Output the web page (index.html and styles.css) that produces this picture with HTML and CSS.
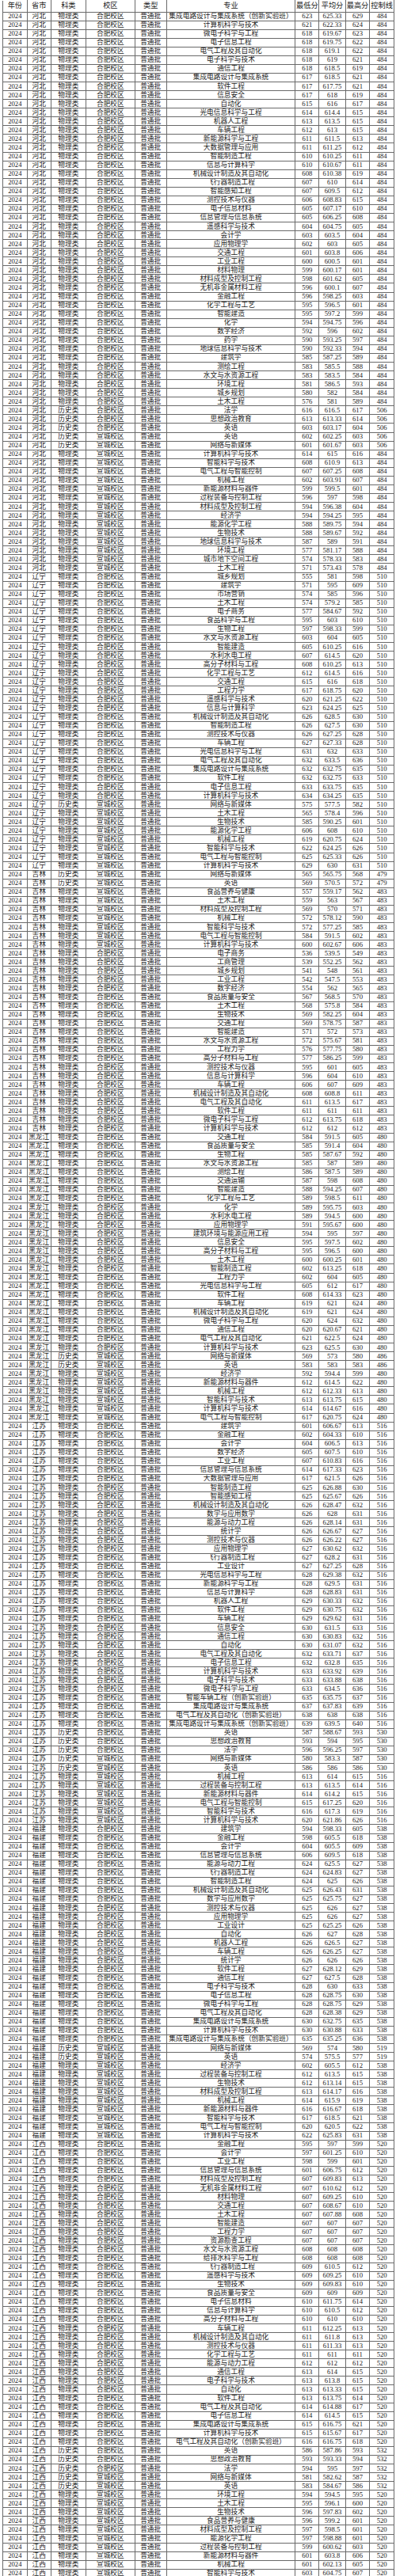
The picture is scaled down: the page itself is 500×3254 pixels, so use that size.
FILE: index.html
```html
<!DOCTYPE html>
<html lang="zh-CN">
<head>
<meta charset="utf-8">
<title>2024 录取分数</title>
<link rel="stylesheet" href="styles.css">
</head>
<body>
<table class="sheet">
<colgroup><col class="c-year"><col class="c-prov"><col class="c-kind"><col class="c-camp"><col class="c-type"><col class="c-major"><col class="c-min"><col class="c-avg"><col class="c-max"><col class="c-line"></colgroup>
<thead>
<tr class="head"><th>年份<th>省市<th>科类<th>校区<th>类型<th>专业<th>最低分<th>平均分<th>最高分<th>控制线
</thead>
<tbody>
<tr><td>2024<td>河北<td>物理类<td>合肥校区<td>普通批<td>集成电路设计与集成系统（创新实验班）<td>623<td>625.33<td>629<td>484
<tr><td>2024<td>河北<td>物理类<td>合肥校区<td>普通批<td>计算机科学与技术<td>621<td>622.33<td>624<td>484
<tr><td>2024<td>河北<td>物理类<td>合肥校区<td>普通批<td>微电子科学与工程<td>618<td>619.67<td>623<td>484
<tr><td>2024<td>河北<td>物理类<td>合肥校区<td>普通批<td>电子信息工程<td>618<td>619.75<td>622<td>484
<tr><td>2024<td>河北<td>物理类<td>合肥校区<td>普通批<td>电气工程及其自动化<td>618<td>619.1<td>622<td>484
<tr><td>2024<td>河北<td>物理类<td>合肥校区<td>普通批<td>电子科学与技术<td>618<td>619<td>621<td>484
<tr><td>2024<td>河北<td>物理类<td>合肥校区<td>普通批<td>通信工程<td>618<td>618.5<td>619<td>484
<tr><td>2024<td>河北<td>物理类<td>合肥校区<td>普通批<td>集成电路设计与集成系统<td>617<td>618.5<td>621<td>484
<tr><td>2024<td>河北<td>物理类<td>合肥校区<td>普通批<td>软件工程<td>617<td>617.75<td>621<td>484
<tr><td>2024<td>河北<td>物理类<td>合肥校区<td>普通批<td>信息安全<td>617<td>618<td>619<td>484
<tr><td>2024<td>河北<td>物理类<td>合肥校区<td>普通批<td>自动化<td>615<td>616<td>617<td>484
<tr><td>2024<td>河北<td>物理类<td>合肥校区<td>普通批<td>光电信息科学与工程<td>614<td>614.4<td>615<td>484
<tr><td>2024<td>河北<td>物理类<td>合肥校区<td>普通批<td>机器人工程<td>613<td>613.5<td>615<td>484
<tr><td>2024<td>河北<td>物理类<td>合肥校区<td>普通批<td>车辆工程<td>612<td>613<td>615<td>484
<tr><td>2024<td>河北<td>物理类<td>合肥校区<td>普通批<td>新能源科学与工程<td>611<td>611.5<td>613<td>484
<tr><td>2024<td>河北<td>物理类<td>合肥校区<td>普通批<td>大数据管理与应用<td>611<td>611.25<td>612<td>484
<tr><td>2024<td>河北<td>物理类<td>合肥校区<td>普通批<td>智能制造工程<td>610<td>610.25<td>611<td>484
<tr><td>2024<td>河北<td>物理类<td>合肥校区<td>普通批<td>信息与计算科学<td>610<td>610.67<td>611<td>484
<tr><td>2024<td>河北<td>物理类<td>合肥校区<td>普通批<td>机械设计制造及其自动化<td>608<td>610.38<td>619<td>484
<tr><td>2024<td>河北<td>物理类<td>合肥校区<td>普通批<td>飞行器制造工程<td>607<td>610<td>614<td>484
<tr><td>2024<td>河北<td>物理类<td>合肥校区<td>普通批<td>智能感知工程<td>607<td>609.5<td>612<td>484
<tr><td>2024<td>河北<td>物理类<td>合肥校区<td>普通批<td>测控技术与仪器<td>606<td>608.83<td>615<td>484
<tr><td>2024<td>河北<td>物理类<td>合肥校区<td>普通批<td>电子信息材料<td>605<td>607.17<td>610<td>484
<tr><td>2024<td>河北<td>物理类<td>合肥校区<td>普通批<td>信息管理与信息系统<td>605<td>606.25<td>608<td>484
<tr><td>2024<td>河北<td>物理类<td>合肥校区<td>普通批<td>遥感科学与技术<td>604<td>604.75<td>605<td>484
<tr><td>2024<td>河北<td>物理类<td>合肥校区<td>普通批<td>会计学<td>603<td>603.5<td>604<td>484
<tr><td>2024<td>河北<td>物理类<td>合肥校区<td>普通批<td>应用物理学<td>602<td>603<td>605<td>484
<tr><td>2024<td>河北<td>物理类<td>合肥校区<td>普通批<td>交通工程<td>601<td>603.8<td>606<td>484
<tr><td>2024<td>河北<td>物理类<td>合肥校区<td>普通批<td>工业工程<td>600<td>600.5<td>601<td>484
<tr><td>2024<td>河北<td>物理类<td>合肥校区<td>普通批<td>材料物理<td>599<td>600.17<td>601<td>484
<tr><td>2024<td>河北<td>物理类<td>合肥校区<td>普通批<td>材料成型及控制工程<td>598<td>601.62<td>605<td>484
<tr><td>2024<td>河北<td>物理类<td>合肥校区<td>普通批<td>无机非金属材料工程<td>596<td>600.1<td>607<td>484
<tr><td>2024<td>河北<td>物理类<td>合肥校区<td>普通批<td>金融工程<td>596<td>598.25<td>603<td>484
<tr><td>2024<td>河北<td>物理类<td>合肥校区<td>普通批<td>化学工程与工艺<td>595<td>596.5<td>601<td>484
<tr><td>2024<td>河北<td>物理类<td>合肥校区<td>普通批<td>智能建造<td>595<td>597.2<td>599<td>484
<tr><td>2024<td>河北<td>物理类<td>合肥校区<td>普通批<td>化学<td>594<td>594.75<td>596<td>484
<tr><td>2024<td>河北<td>物理类<td>合肥校区<td>普通批<td>数字经济<td>592<td>596<td>602<td>484
<tr><td>2024<td>河北<td>物理类<td>合肥校区<td>普通批<td>药学<td>590<td>593.25<td>597<td>484
<tr><td>2024<td>河北<td>物理类<td>合肥校区<td>普通批<td>地球信息科学与技术<td>590<td>592.33<td>594<td>484
<tr><td>2024<td>河北<td>物理类<td>合肥校区<td>普通批<td>建筑学<td>585<td>587.25<td>589<td>484
<tr><td>2024<td>河北<td>物理类<td>合肥校区<td>普通批<td>测绘工程<td>583<td>585.5<td>588<td>484
<tr><td>2024<td>河北<td>物理类<td>合肥校区<td>普通批<td>水文与水资源工程<td>583<td>583.5<td>584<td>484
<tr><td>2024<td>河北<td>物理类<td>合肥校区<td>普通批<td>环境工程<td>581<td>586.5<td>593<td>484
<tr><td>2024<td>河北<td>物理类<td>合肥校区<td>普通批<td>城乡规划<td>580<td>582<td>584<td>484
<tr><td>2024<td>河北<td>物理类<td>合肥校区<td>普通批<td>土木工程<td>576<td>581<td>589<td>484
<tr><td>2024<td>河北<td>历史类<td>合肥校区<td>普通批<td>法学<td>616<td>616.5<td>617<td>506
<tr><td>2024<td>河北<td>历史类<td>合肥校区<td>普通批<td>思想政治教育<td>613<td>613.33<td>614<td>506
<tr><td>2024<td>河北<td>历史类<td>合肥校区<td>普通批<td>英语<td>603<td>603.17<td>604<td>506
<tr><td>2024<td>河北<td>历史类<td>宣城校区<td>普通批<td>英语<td>602<td>602.25<td>603<td>506
<tr><td>2024<td>河北<td>历史类<td>宣城校区<td>普通批<td>网络与新媒体<td>601<td>601.67<td>603<td>506
<tr><td>2024<td>河北<td>物理类<td>宣城校区<td>普通批<td>计算机科学与技术<td>614<td>615<td>616<td>484
<tr><td>2024<td>河北<td>物理类<td>宣城校区<td>普通批<td>智能科学与技术<td>608<td>610.9<td>613<td>484
<tr><td>2024<td>河北<td>物理类<td>宣城校区<td>普通批<td>电气工程与智能控制<td>607<td>607.25<td>608<td>484
<tr><td>2024<td>河北<td>物理类<td>宣城校区<td>普通批<td>机械工程<td>602<td>603.91<td>607<td>484
<tr><td>2024<td>河北<td>物理类<td>宣城校区<td>普通批<td>新能源材料与器件<td>599<td>599.5<td>601<td>484
<tr><td>2024<td>河北<td>物理类<td>宣城校区<td>普通批<td>过程装备与控制工程<td>596<td>597<td>598<td>484
<tr><td>2024<td>河北<td>物理类<td>宣城校区<td>普通批<td>材料成型及控制工程<td>594<td>596.38<td>604<td>484
<tr><td>2024<td>河北<td>物理类<td>宣城校区<td>普通批<td>经济学<td>594<td>594.25<td>595<td>484
<tr><td>2024<td>河北<td>物理类<td>宣城校区<td>普通批<td>能源化学工程<td>588<td>589.75<td>594<td>484
<tr><td>2024<td>河北<td>物理类<td>宣城校区<td>普通批<td>生物技术<td>588<td>589.67<td>592<td>484
<tr><td>2024<td>河北<td>物理类<td>宣城校区<td>普通批<td>地球信息科学与技术<td>587<td>589<td>591<td>484
<tr><td>2024<td>河北<td>物理类<td>宣城校区<td>普通批<td>环境工程<td>577<td>581.17<td>588<td>484
<tr><td>2024<td>河北<td>物理类<td>宣城校区<td>普通批<td>城市地下空间工程<td>574<td>578.33<td>583<td>484
<tr><td>2024<td>河北<td>物理类<td>宣城校区<td>普通批<td>土木工程<td>571<td>573.43<td>578<td>484
<tr><td>2024<td>辽宁<td>物理类<td>合肥校区<td>普通批<td>城乡规划<td>555<td>581<td>598<td>510
<tr><td>2024<td>辽宁<td>物理类<td>合肥校区<td>普通批<td>建筑学<td>571<td>595<td>609<td>510
<tr><td>2024<td>辽宁<td>物理类<td>合肥校区<td>普通批<td>市场营销<td>574<td>585<td>596<td>510
<tr><td>2024<td>辽宁<td>物理类<td>合肥校区<td>普通批<td>土木工程<td>574<td>579.2<td>585<td>510
<tr><td>2024<td>辽宁<td>物理类<td>合肥校区<td>普通批<td>电子商务<td>577<td>584.67<td>592<td>510
<tr><td>2024<td>辽宁<td>物理类<td>合肥校区<td>普通批<td>食品科学与工程<td>595<td>603<td>610<td>510
<tr><td>2024<td>辽宁<td>物理类<td>合肥校区<td>普通批<td>生物工程<td>597<td>598.33<td>599<td>510
<tr><td>2024<td>辽宁<td>物理类<td>合肥校区<td>普通批<td>水文与水资源工程<td>603<td>604<td>605<td>510
<tr><td>2024<td>辽宁<td>物理类<td>合肥校区<td>普通批<td>智能建造<td>605<td>610.25<td>616<td>510
<tr><td>2024<td>辽宁<td>物理类<td>合肥校区<td>普通批<td>水利水电工程<td>607<td>614.5<td>620<td>510
<tr><td>2024<td>辽宁<td>物理类<td>合肥校区<td>普通批<td>高分子材料与工程<td>608<td>610.25<td>613<td>510
<tr><td>2024<td>辽宁<td>物理类<td>合肥校区<td>普通批<td>化学工程与工艺<td>612<td>614.5<td>616<td>510
<tr><td>2024<td>辽宁<td>物理类<td>合肥校区<td>普通批<td>交通工程<td>615<td>616<td>618<td>510
<tr><td>2024<td>辽宁<td>物理类<td>合肥校区<td>普通批<td>工程力学<td>617<td>618.75<td>620<td>510
<tr><td>2024<td>辽宁<td>物理类<td>合肥校区<td>普通批<td>遥感科学与技术<td>620<td>621.25<td>622<td>510
<tr><td>2024<td>辽宁<td>物理类<td>合肥校区<td>普通批<td>信息与计算科学<td>623<td>624.25<td>625<td>510
<tr><td>2024<td>辽宁<td>物理类<td>合肥校区<td>普通批<td>机械设计制造及其自动化<td>626<td>628.5<td>630<td>510
<tr><td>2024<td>辽宁<td>物理类<td>合肥校区<td>普通批<td>智能制造工程<td>626<td>627.5<td>630<td>510
<tr><td>2024<td>辽宁<td>物理类<td>合肥校区<td>普通批<td>测控技术与仪器<td>626<td>627.25<td>628<td>510
<tr><td>2024<td>辽宁<td>物理类<td>合肥校区<td>普通批<td>车辆工程<td>627<td>627.33<td>628<td>510
<tr><td>2024<td>辽宁<td>物理类<td>合肥校区<td>普通批<td>光电信息科学与工程<td>631<td>632<td>633<td>510
<tr><td>2024<td>辽宁<td>物理类<td>合肥校区<td>普通批<td>电气工程及其自动化<td>632<td>633.5<td>636<td>510
<tr><td>2024<td>辽宁<td>物理类<td>合肥校区<td>普通批<td>集成电路设计与集成系统<td>632<td>632.75<td>635<td>510
<tr><td>2024<td>辽宁<td>物理类<td>合肥校区<td>普通批<td>软件工程<td>632<td>632.75<td>633<td>510
<tr><td>2024<td>辽宁<td>物理类<td>合肥校区<td>普通批<td>电子信息工程<td>633<td>633.75<td>635<td>510
<tr><td>2024<td>辽宁<td>物理类<td>合肥校区<td>普通批<td>计算机科学与技术<td>634<td>634.25<td>635<td>510
<tr><td>2024<td>辽宁<td>历史类<td>宣城校区<td>普通批<td>网络与新媒体<td>575<td>577.5<td>582<td>510
<tr><td>2024<td>辽宁<td>物理类<td>宣城校区<td>普通批<td>土木工程<td>565<td>578.4<td>596<td>510
<tr><td>2024<td>辽宁<td>物理类<td>宣城校区<td>普通批<td>生物技术<td>585<td>590.25<td>601<td>510
<tr><td>2024<td>辽宁<td>物理类<td>宣城校区<td>普通批<td>能源化学工程<td>606<td>608<td>610<td>510
<tr><td>2024<td>辽宁<td>物理类<td>宣城校区<td>普通批<td>机械工程<td>619<td>620.75<td>624<td>510
<tr><td>2024<td>辽宁<td>物理类<td>宣城校区<td>普通批<td>智能科学与技术<td>622<td>624.25<td>626<td>510
<tr><td>2024<td>辽宁<td>物理类<td>宣城校区<td>普通批<td>电气工程与智能控制<td>625<td>625.33<td>626<td>510
<tr><td>2024<td>辽宁<td>物理类<td>宣城校区<td>普通批<td>计算机科学与技术<td>629<td>630<td>631<td>510
<tr><td>2024<td>吉林<td>历史类<td>宣城校区<td>普通批<td>网络与新媒体<td>565<td>565.75<td>568<td>479
<tr><td>2024<td>吉林<td>历史类<td>宣城校区<td>普通批<td>英语<td>569<td>570.5<td>572<td>479
<tr><td>2024<td>吉林<td>物理类<td>宣城校区<td>普通批<td>食品营养与健康<td>557<td>559.17<td>562<td>483
<tr><td>2024<td>吉林<td>物理类<td>宣城校区<td>普通批<td>土木工程<td>559<td>563<td>567<td>483
<tr><td>2024<td>吉林<td>物理类<td>宣城校区<td>普通批<td>材料成型及控制工程<td>569<td>570<td>571<td>483
<tr><td>2024<td>吉林<td>物理类<td>宣城校区<td>普通批<td>机械工程<td>572<td>578.12<td>590<td>483
<tr><td>2024<td>吉林<td>物理类<td>宣城校区<td>普通批<td>智能科学与技术<td>572<td>577.25<td>585<td>483
<tr><td>2024<td>吉林<td>物理类<td>宣城校区<td>普通批<td>电气工程与智能控制<td>584<td>591.5<td>602<td>483
<tr><td>2024<td>吉林<td>物理类<td>宣城校区<td>普通批<td>计算机科学与技术<td>600<td>602.67<td>606<td>483
<tr><td>2024<td>吉林<td>物理类<td>合肥校区<td>普通批<td>电子商务<td>536<td>539.5<td>549<td>483
<tr><td>2024<td>吉林<td>物理类<td>合肥校区<td>普通批<td>工商管理<td>539<td>552.25<td>562<td>483
<tr><td>2024<td>吉林<td>物理类<td>合肥校区<td>普通批<td>城乡规划<td>541<td>548<td>561<td>483
<tr><td>2024<td>吉林<td>物理类<td>合肥校区<td>普通批<td>工业工程<td>542<td>547.5<td>553<td>483
<tr><td>2024<td>吉林<td>物理类<td>合肥校区<td>普通批<td>数字经济<td>554<td>562<td>565<td>483
<tr><td>2024<td>吉林<td>物理类<td>合肥校区<td>普通批<td>食品质量与安全<td>567<td>568.5<td>570<td>483
<tr><td>2024<td>吉林<td>物理类<td>合肥校区<td>普通批<td>土木工程<td>568<td>575.8<td>584<td>483
<tr><td>2024<td>吉林<td>物理类<td>合肥校区<td>普通批<td>生物技术<td>569<td>582.25<td>604<td>483
<tr><td>2024<td>吉林<td>物理类<td>合肥校区<td>普通批<td>交通工程<td>569<td>578.75<td>587<td>483
<tr><td>2024<td>吉林<td>物理类<td>合肥校区<td>普通批<td>智能建造<td>571<td>572<td>573<td>483
<tr><td>2024<td>吉林<td>物理类<td>合肥校区<td>普通批<td>水文与水资源工程<td>572<td>575.67<td>581<td>483
<tr><td>2024<td>吉林<td>物理类<td>合肥校区<td>普通批<td>工程力学<td>576<td>577.75<td>580<td>483
<tr><td>2024<td>吉林<td>物理类<td>合肥校区<td>普通批<td>高分子材料与工程<td>577<td>586.25<td>599<td>483
<tr><td>2024<td>吉林<td>物理类<td>合肥校区<td>普通批<td>测控技术与仪器<td>595<td>601<td>605<td>483
<tr><td>2024<td>吉林<td>物理类<td>合肥校区<td>普通批<td>信息与计算科学<td>596<td>604<td>610<td>483
<tr><td>2024<td>吉林<td>物理类<td>合肥校区<td>普通批<td>车辆工程<td>606<td>607<td>609<td>483
<tr><td>2024<td>吉林<td>物理类<td>合肥校区<td>普通批<td>机械设计制造及其自动化<td>608<td>608.8<td>611<td>483
<tr><td>2024<td>吉林<td>物理类<td>合肥校区<td>普通批<td>电气工程及其自动化<td>611<td>613.5<td>617<td>483
<tr><td>2024<td>吉林<td>物理类<td>合肥校区<td>普通批<td>软件工程<td>611<td>611<td>611<td>483
<tr><td>2024<td>吉林<td>物理类<td>合肥校区<td>普通批<td>微电子科学与工程<td>612<td>613.75<td>618<td>483
<tr><td>2024<td>吉林<td>物理类<td>合肥校区<td>普通批<td>计算机科学与技术<td>612<td>612<td>612<td>483
<tr><td>2024<td>黑龙江<td>物理类<td>合肥校区<td>普通批<td>交通工程<td>584<td>591.5<td>605<td>480
<tr><td>2024<td>黑龙江<td>物理类<td>合肥校区<td>普通批<td>食品质量与安全<td>585<td>591.4<td>604<td>480
<tr><td>2024<td>黑龙江<td>物理类<td>合肥校区<td>普通批<td>生物工程<td>585<td>587.67<td>592<td>480
<tr><td>2024<td>黑龙江<td>物理类<td>合肥校区<td>普通批<td>水文与水资源工程<td>585<td>587<td>589<td>480
<tr><td>2024<td>黑龙江<td>物理类<td>合肥校区<td>普通批<td>测绘工程<td>586<td>587.5<td>589<td>480
<tr><td>2024<td>黑龙江<td>物理类<td>合肥校区<td>普通批<td>交通运输<td>587<td>598<td>608<td>480
<tr><td>2024<td>黑龙江<td>物理类<td>合肥校区<td>普通批<td>智能建造<td>588<td>594.25<td>607<td>480
<tr><td>2024<td>黑龙江<td>物理类<td>合肥校区<td>普通批<td>化学工程与工艺<td>589<td>598.5<td>611<td>480
<tr><td>2024<td>黑龙江<td>物理类<td>合肥校区<td>普通批<td>化学<td>589<td>595.75<td>603<td>480
<tr><td>2024<td>黑龙江<td>物理类<td>合肥校区<td>普通批<td>水利水电工程<td>589<td>594.5<td>600<td>480
<tr><td>2024<td>黑龙江<td>物理类<td>合肥校区<td>普通批<td>应用物理学<td>591<td>595.67<td>600<td>480
<tr><td>2024<td>黑龙江<td>物理类<td>合肥校区<td>普通批<td>建筑环境与能源应用工程<td>594<td>595<td>597<td>480
<tr><td>2024<td>黑龙江<td>物理类<td>合肥校区<td>普通批<td>信息安全<td>595<td>597.5<td>602<td>480
<tr><td>2024<td>黑龙江<td>物理类<td>合肥校区<td>普通批<td>高分子材料与工程<td>595<td>596.5<td>600<td>480
<tr><td>2024<td>黑龙江<td>物理类<td>合肥校区<td>普通批<td>土木工程<td>600<td>600.25<td>601<td>480
<tr><td>2024<td>黑龙江<td>物理类<td>合肥校区<td>普通批<td>智能制造工程<td>602<td>613.25<td>618<td>480
<tr><td>2024<td>黑龙江<td>物理类<td>合肥校区<td>普通批<td>工程力学<td>602<td>604<td>605<td>480
<tr><td>2024<td>黑龙江<td>物理类<td>合肥校区<td>普通批<td>光电信息科学与工程<td>605<td>612<td>617<td>480
<tr><td>2024<td>黑龙江<td>物理类<td>合肥校区<td>普通批<td>软件工程<td>608<td>614.33<td>623<td>480
<tr><td>2024<td>黑龙江<td>物理类<td>合肥校区<td>普通批<td>车辆工程<td>619<td>621<td>624<td>480
<tr><td>2024<td>黑龙江<td>物理类<td>合肥校区<td>普通批<td>机械设计制造及其自动化<td>619<td>621<td>624<td>480
<tr><td>2024<td>黑龙江<td>物理类<td>合肥校区<td>普通批<td>微电子科学与工程<td>620<td>624<td>632<td>480
<tr><td>2024<td>黑龙江<td>物理类<td>合肥校区<td>普通批<td>通信工程<td>620<td>620.67<td>621<td>480
<tr><td>2024<td>黑龙江<td>物理类<td>合肥校区<td>普通批<td>电气工程及其自动化<td>621<td>622.5<td>624<td>480
<tr><td>2024<td>黑龙江<td>物理类<td>合肥校区<td>普通批<td>计算机科学与技术<td>623<td>625.5<td>630<td>480
<tr><td>2024<td>黑龙江<td>历史类<td>宣城校区<td>普通批<td>网络与新媒体<td>569<td>573<td>580<td>486
<tr><td>2024<td>黑龙江<td>历史类<td>宣城校区<td>普通批<td>英语<td>583<td>583<td>583<td>486
<tr><td>2024<td>黑龙江<td>物理类<td>宣城校区<td>普通批<td>经济学<td>592<td>594.4<td>599<td>480
<tr><td>2024<td>黑龙江<td>物理类<td>宣城校区<td>普通批<td>新能源材料与器件<td>612<td>614.5<td>622<td>480
<tr><td>2024<td>黑龙江<td>物理类<td>宣城校区<td>普通批<td>机械工程<td>612<td>612.33<td>613<td>480
<tr><td>2024<td>黑龙江<td>物理类<td>宣城校区<td>普通批<td>智能科学与技术<td>613<td>613.75<td>615<td>480
<tr><td>2024<td>黑龙江<td>物理类<td>宣城校区<td>普通批<td>计算机科学与技术<td>614<td>614.67<td>616<td>480
<tr><td>2024<td>黑龙江<td>物理类<td>宣城校区<td>普通批<td>电气工程与智能控制<td>617<td>620.75<td>624<td>480
<tr><td>2024<td>江苏<td>物理类<td>合肥校区<td>普通批<td>建筑学<td>601<td>606.67<td>613<td>516
<tr><td>2024<td>江苏<td>物理类<td>合肥校区<td>普通批<td>金融工程<td>602<td>604.33<td>610<td>516
<tr><td>2024<td>江苏<td>物理类<td>合肥校区<td>普通批<td>会计学<td>604<td>606.5<td>613<td>516
<tr><td>2024<td>江苏<td>物理类<td>合肥校区<td>普通批<td>数字经济<td>605<td>607.5<td>610<td>516
<tr><td>2024<td>江苏<td>物理类<td>合肥校区<td>普通批<td>工业工程<td>607<td>610.83<td>616<td>516
<tr><td>2024<td>江苏<td>物理类<td>合肥校区<td>普通批<td>信息管理与信息系统<td>614<td>617.33<td>623<td>516
<tr><td>2024<td>江苏<td>物理类<td>合肥校区<td>普通批<td>大数据管理与应用<td>617<td>621.5<td>626<td>516
<tr><td>2024<td>江苏<td>物理类<td>合肥校区<td>普通批<td>智能制造工程<td>625<td>626.88<td>630<td>516
<tr><td>2024<td>江苏<td>物理类<td>合肥校区<td>普通批<td>智能感知工程<td>625<td>625.67<td>626<td>516
<tr><td>2024<td>江苏<td>物理类<td>合肥校区<td>普通批<td>机械设计制造及其自动化<td>626<td>628.47<td>632<td>516
<tr><td>2024<td>江苏<td>物理类<td>合肥校区<td>普通批<td>数学与应用数学<td>626<td>628<td>631<td>516
<tr><td>2024<td>江苏<td>物理类<td>合肥校区<td>普通批<td>能源与动力工程<td>626<td>628.14<td>631<td>516
<tr><td>2024<td>江苏<td>物理类<td>合肥校区<td>普通批<td>统计学<td>626<td>626.67<td>627<td>516
<tr><td>2024<td>江苏<td>物理类<td>合肥校区<td>普通批<td>测控技术与仪器<td>626<td>626.22<td>627<td>516
<tr><td>2024<td>江苏<td>物理类<td>合肥校区<td>普通批<td>应用物理学<td>627<td>630.62<td>632<td>516
<tr><td>2024<td>江苏<td>物理类<td>合肥校区<td>普通批<td>飞行器制造工程<td>627<td>628.2<td>631<td>516
<tr><td>2024<td>江苏<td>物理类<td>合肥校区<td>普通批<td>工业设计<td>627<td>627.25<td>628<td>516
<tr><td>2024<td>江苏<td>物理类<td>合肥校区<td>普通批<td>光电信息科学与工程<td>628<td>629.38<td>632<td>516
<tr><td>2024<td>江苏<td>物理类<td>合肥校区<td>普通批<td>新能源科学与工程<td>628<td>629.5<td>631<td>516
<tr><td>2024<td>江苏<td>物理类<td>合肥校区<td>普通批<td>信息与计算科学<td>628<td>628.83<td>631<td>516
<tr><td>2024<td>江苏<td>物理类<td>合肥校区<td>普通批<td>机器人工程<td>629<td>630.33<td>632<td>516
<tr><td>2024<td>江苏<td>物理类<td>合肥校区<td>普通批<td>软件工程<td>629<td>630.75<td>632<td>516
<tr><td>2024<td>江苏<td>物理类<td>合肥校区<td>普通批<td>车辆工程<td>629<td>629.62<td>631<td>516
<tr><td>2024<td>江苏<td>物理类<td>合肥校区<td>普通批<td>信息安全<td>630<td>631.5<td>633<td>516
<tr><td>2024<td>江苏<td>物理类<td>合肥校区<td>普通批<td>通信工程<td>630<td>630.83<td>632<td>516
<tr><td>2024<td>江苏<td>物理类<td>合肥校区<td>普通批<td>自动化<td>630<td>631.07<td>632<td>516
<tr><td>2024<td>江苏<td>物理类<td>合肥校区<td>普通批<td>电气工程及其自动化<td>632<td>633.71<td>637<td>516
<tr><td>2024<td>江苏<td>物理类<td>合肥校区<td>普通批<td>电子信息工程<td>632<td>632.8<td>635<td>516
<tr><td>2024<td>江苏<td>物理类<td>合肥校区<td>普通批<td>计算机科学与技术<td>633<td>633.92<td>639<td>516
<tr><td>2024<td>江苏<td>物理类<td>合肥校区<td>普通批<td>电子科学与技术<td>633<td>633.88<td>638<td>516
<tr><td>2024<td>江苏<td>物理类<td>合肥校区<td>普通批<td>微电子科学与工程<td>633<td>634.5<td>636<td>516
<tr><td>2024<td>江苏<td>物理类<td>合肥校区<td>普通批<td>智能车辆工程（创新实验班）<td>635<td>635.75<td>637<td>516
<tr><td>2024<td>江苏<td>物理类<td>合肥校区<td>普通批<td>集成电路设计与集成系统<td>637<td>637.83<td>639<td>516
<tr><td>2024<td>江苏<td>物理类<td>合肥校区<td>普通批<td>电气工程及其自动化（创新实验班）<td>638<td>638<td>638<td>516
<tr><td>2024<td>江苏<td>物理类<td>合肥校区<td>普通批<td>集成电路设计与集成系统（创新实验班）<td>639<td>639.5<td>640<td>516
<tr><td>2024<td>江苏<td>历史类<td>合肥校区<td>普通批<td>英语<td>587<td>588.67<td>593<td>530
<tr><td>2024<td>江苏<td>历史类<td>合肥校区<td>普通批<td>思想政治教育<td>593<td>594<td>595<td>530
<tr><td>2024<td>江苏<td>历史类<td>合肥校区<td>普通批<td>法学<td>596<td>596.25<td>597<td>530
<tr><td>2024<td>江苏<td>历史类<td>宣城校区<td>普通批<td>网络与新媒体<td>580<td>583.3<td>587<td>530
<tr><td>2024<td>江苏<td>历史类<td>宣城校区<td>普通批<td>英语<td>586<td>586<td>586<td>530
<tr><td>2024<td>江苏<td>物理类<td>宣城校区<td>普通批<td>机械工程<td>613<td>614<td>615<td>516
<tr><td>2024<td>江苏<td>物理类<td>宣城校区<td>普通批<td>过程装备与控制工程<td>613<td>613.5<td>614<td>516
<tr><td>2024<td>江苏<td>物理类<td>宣城校区<td>普通批<td>新能源材料与器件<td>614<td>614.2<td>615<td>516
<tr><td>2024<td>江苏<td>物理类<td>宣城校区<td>普通批<td>电气工程与智能控制<td>615<td>617.25<td>620<td>516
<tr><td>2024<td>江苏<td>物理类<td>宣城校区<td>普通批<td>智能科学与技术<td>616<td>617.3<td>619<td>516
<tr><td>2024<td>江苏<td>物理类<td>宣城校区<td>普通批<td>计算机科学与技术<td>620<td>621.86<td>626<td>516
<tr><td>2024<td>福建<td>物理类<td>合肥校区<td>普通批<td>建筑学<td>594<td>598.33<td>605<td>538
<tr><td>2024<td>福建<td>物理类<td>合肥校区<td>普通批<td>金融工程<td>598<td>605.5<td>618<td>538
<tr><td>2024<td>福建<td>物理类<td>合肥校区<td>普通批<td>会计学<td>604<td>605.5<td>609<td>538
<tr><td>2024<td>福建<td>物理类<td>合肥校区<td>普通批<td>信息管理与信息系统<td>606<td>609.5<td>618<td>538
<tr><td>2024<td>福建<td>物理类<td>合肥校区<td>普通批<td>能源与动力工程<td>624<td>625.5<td>627<td>538
<tr><td>2024<td>福建<td>物理类<td>合肥校区<td>普通批<td>飞行器制造工程<td>624<td>624.83<td>627<td>538
<tr><td>2024<td>福建<td>物理类<td>合肥校区<td>普通批<td>智能制造工程<td>624<td>625<td>626<td>538
<tr><td>2024<td>福建<td>物理类<td>合肥校区<td>普通批<td>机械设计制造及其自动化<td>625<td>626.43<td>631<td>538
<tr><td>2024<td>福建<td>物理类<td>合肥校区<td>普通批<td>数学与应用数学<td>625<td>625.75<td>627<td>538
<tr><td>2024<td>福建<td>物理类<td>合肥校区<td>普通批<td>测控技术与仪器<td>625<td>626<td>627<td>538
<tr><td>2024<td>福建<td>物理类<td>合肥校区<td>普通批<td>应用物理学<td>625<td>626<td>627<td>538
<tr><td>2024<td>福建<td>物理类<td>合肥校区<td>普通批<td>工业设计<td>625<td>625.25<td>626<td>538
<tr><td>2024<td>福建<td>物理类<td>合肥校区<td>普通批<td>自动化<td>626<td>627<td>628<td>538
<tr><td>2024<td>福建<td>物理类<td>合肥校区<td>普通批<td>机器人工程<td>626<td>626.5<td>627<td>538
<tr><td>2024<td>福建<td>物理类<td>合肥校区<td>普通批<td>车辆工程<td>626<td>626.25<td>627<td>538
<tr><td>2024<td>福建<td>物理类<td>合肥校区<td>普通批<td>统计学<td>626<td>626<td>626<td>538
<tr><td>2024<td>福建<td>物理类<td>合肥校区<td>普通批<td>软件工程<td>627<td>628.12<td>629<td>538
<tr><td>2024<td>福建<td>物理类<td>合肥校区<td>普通批<td>通信工程<td>627<td>627.5<td>628<td>538
<tr><td>2024<td>福建<td>物理类<td>合肥校区<td>普通批<td>电子科学与技术<td>628<td>630<td>633<td>538
<tr><td>2024<td>福建<td>物理类<td>合肥校区<td>普通批<td>电子信息工程<td>628<td>628.75<td>630<td>538
<tr><td>2024<td>福建<td>物理类<td>合肥校区<td>普通批<td>微电子科学与工程<td>628<td>628.75<td>629<td>538
<tr><td>2024<td>福建<td>物理类<td>合肥校区<td>普通批<td>电气工程及其自动化<td>628<td>628.38<td>629<td>538
<tr><td>2024<td>福建<td>物理类<td>合肥校区<td>普通批<td>集成电路设计与集成系统<td>630<td>632.75<td>635<td>538
<tr><td>2024<td>福建<td>物理类<td>合肥校区<td>普通批<td>计算机科学与技术<td>630<td>630.88<td>633<td>538
<tr><td>2024<td>福建<td>物理类<td>合肥校区<td>普通批<td>集成电路设计与集成系统（创新实验班）<td>635<td>635.25<td>636<td>538
<tr><td>2024<td>福建<td>历史类<td>宣城校区<td>普通批<td>网络与新媒体<td>569<td>574<td>580<td>519
<tr><td>2024<td>福建<td>历史类<td>宣城校区<td>普通批<td>英语<td>574<td>575.5<td>577<td>519
<tr><td>2024<td>福建<td>物理类<td>宣城校区<td>普通批<td>经济学<td>602<td>605.5<td>612<td>538
<tr><td>2024<td>福建<td>物理类<td>宣城校区<td>普通批<td>过程装备与控制工程<td>612<td>613.5<td>615<td>538
<tr><td>2024<td>福建<td>物理类<td>宣城校区<td>普通批<td>生物技术<td>612<td>613.14<td>615<td>538
<tr><td>2024<td>福建<td>物理类<td>宣城校区<td>普通批<td>材料成型及控制工程<td>613<td>614.17<td>616<td>538
<tr><td>2024<td>福建<td>物理类<td>宣城校区<td>普通批<td>机械工程<td>614<td>615.9<td>619<td>538
<tr><td>2024<td>福建<td>物理类<td>宣城校区<td>普通批<td>新能源材料与器件<td>616<td>616.67<td>618<td>538
<tr><td>2024<td>福建<td>物理类<td>宣城校区<td>普通批<td>智能科学与技术<td>617<td>618.5<td>621<td>538
<tr><td>2024<td>福建<td>物理类<td>宣城校区<td>普通批<td>电气工程与智能控制<td>620<td>620.5<td>622<td>538
<tr><td>2024<td>福建<td>物理类<td>宣城校区<td>普通批<td>计算机科学与技术<td>622<td>625.83<td>631<td>538
<tr><td>2024<td>江西<td>物理类<td>合肥校区<td>普通批<td>金融工程<td>595<td>597<td>599<td>520
<tr><td>2024<td>江西<td>物理类<td>合肥校区<td>普通批<td>会计学<td>597<td>601.25<td>610<td>520
<tr><td>2024<td>江西<td>物理类<td>合肥校区<td>普通批<td>工业工程<td>598<td>599<td>601<td>520
<tr><td>2024<td>江西<td>物理类<td>合肥校区<td>普通批<td>信息管理与信息系统<td>601<td>606.75<td>612<td>520
<tr><td>2024<td>江西<td>物理类<td>合肥校区<td>普通批<td>材料成型及控制工程<td>607<td>609.83<td>613<td>520
<tr><td>2024<td>江西<td>物理类<td>合肥校区<td>普通批<td>无机非金属材料工程<td>607<td>610.62<td>612<td>520
<tr><td>2024<td>江西<td>物理类<td>合肥校区<td>普通批<td>材料物理<td>607<td>609.25<td>610<td>520
<tr><td>2024<td>江西<td>物理类<td>合肥校区<td>普通批<td>交通工程<td>607<td>608.67<td>610<td>520
<tr><td>2024<td>江西<td>物理类<td>合肥校区<td>普通批<td>土木工程<td>607<td>607.88<td>608<td>520
<tr><td>2024<td>江西<td>物理类<td>合肥校区<td>普通批<td>智能建造<td>607<td>607<td>607<td>520
<tr><td>2024<td>江西<td>物理类<td>合肥校区<td>普通批<td>工程力学<td>607<td>607<td>607<td>520
<tr><td>2024<td>江西<td>物理类<td>合肥校区<td>普通批<td>资源勘查工程<td>607<td>607<td>607<td>520
<tr><td>2024<td>江西<td>物理类<td>合肥校区<td>普通批<td>水文与水资源工程<td>608<td>608<td>608<td>520
<tr><td>2024<td>江西<td>物理类<td>合肥校区<td>普通批<td>给排水科学与工程<td>608<td>608<td>608<td>520
<tr><td>2024<td>江西<td>物理类<td>合肥校区<td>普通批<td>飞行器制造工程<td>609<td>610.5<td>612<td>520
<tr><td>2024<td>江西<td>物理类<td>合肥校区<td>普通批<td>遥感科学与技术<td>609<td>609.25<td>610<td>520
<tr><td>2024<td>江西<td>物理类<td>合肥校区<td>普通批<td>生物技术<td>609<td>609.83<td>610<td>520
<tr><td>2024<td>江西<td>物理类<td>合肥校区<td>普通批<td>食品质量与安全<td>609<td>609<td>609<td>520
<tr><td>2024<td>江西<td>物理类<td>合肥校区<td>普通批<td>电子信息材料<td>610<td>611.75<td>614<td>520
<tr><td>2024<td>江西<td>物理类<td>合肥校区<td>普通批<td>信息与计算科学<td>610<td>610.5<td>612<td>520
<tr><td>2024<td>江西<td>物理类<td>合肥校区<td>普通批<td>高分子材料与工程<td>610<td>610<td>610<td>520
<tr><td>2024<td>江西<td>物理类<td>合肥校区<td>普通批<td>车辆工程<td>611<td>612.25<td>613<td>520
<tr><td>2024<td>江西<td>物理类<td>合肥校区<td>普通批<td>机械设计制造及其自动化<td>611<td>611.8<td>613<td>520
<tr><td>2024<td>江西<td>物理类<td>合肥校区<td>普通批<td>测控技术与仪器<td>611<td>611.33<td>613<td>520
<tr><td>2024<td>江西<td>物理类<td>合肥校区<td>普通批<td>化学工程与工艺<td>611<td>611<td>611<td>520
<tr><td>2024<td>江西<td>物理类<td>合肥校区<td>普通批<td>能源与动力工程<td>612<td>612<td>612<td>520
<tr><td>2024<td>江西<td>物理类<td>合肥校区<td>普通批<td>通信工程<td>613<td>614<td>615<td>520
<tr><td>2024<td>江西<td>物理类<td>合肥校区<td>普通批<td>电子科学与技术<td>613<td>613.8<td>615<td>520
<tr><td>2024<td>江西<td>物理类<td>合肥校区<td>普通批<td>自动化<td>613<td>613.33<td>615<td>520
<tr><td>2024<td>江西<td>物理类<td>合肥校区<td>普通批<td>软件工程<td>613<td>613.75<td>614<td>520
<tr><td>2024<td>江西<td>物理类<td>合肥校区<td>普通批<td>电气工程及其自动化<td>614<td>614.88<td>617<td>520
<tr><td>2024<td>江西<td>物理类<td>合肥校区<td>普通批<td>电子信息工程<td>614<td>614.5<td>615<td>520
<tr><td>2024<td>江西<td>物理类<td>合肥校区<td>普通批<td>集成电路设计与集成系统<td>615<td>616.75<td>621<td>520
<tr><td>2024<td>江西<td>物理类<td>合肥校区<td>普通批<td>计算机科学与技术<td>615<td>615.67<td>617<td>520
<tr><td>2024<td>江西<td>物理类<td>合肥校区<td>普通批<td>电气工程及其自动化（创新实验班）<td>616<td>616.75<td>618<td>520
<tr><td>2024<td>江西<td>历史类<td>合肥校区<td>普通批<td>英语<td>586<td>587.86<td>593<td>532
<tr><td>2024<td>江西<td>历史类<td>合肥校区<td>普通批<td>思想政治教育<td>593<td>593.33<td>594<td>532
<tr><td>2024<td>江西<td>历史类<td>合肥校区<td>普通批<td>法学<td>594<td>595<td>597<td>532
<tr><td>2024<td>江西<td>历史类<td>宣城校区<td>普通批<td>网络与新媒体<td>581<td>582.62<td>587<td>532
<tr><td>2024<td>江西<td>历史类<td>宣城校区<td>普通批<td>英语<td>583<td>584.67<td>586<td>532
<tr><td>2024<td>江西<td>物理类<td>宣城校区<td>普通批<td>环境工程<td>594<td>594.5<td>595<td>520
<tr><td>2024<td>江西<td>物理类<td>宣城校区<td>普通批<td>土木工程<td>595<td>596.1<td>600<td>520
<tr><td>2024<td>江西<td>物理类<td>宣城校区<td>普通批<td>生物技术<td>596<td>597.83<td>602<td>520
<tr><td>2024<td>江西<td>物理类<td>宣城校区<td>普通批<td>食品营养与健康<td>596<td>599.2<td>601<td>520
<tr><td>2024<td>江西<td>物理类<td>宣城校区<td>普通批<td>材料成型及控制工程<td>597<td>598.5<td>601<td>520
<tr><td>2024<td>江西<td>物理类<td>宣城校区<td>普通批<td>能源化学工程<td>597<td>598.88<td>601<td>520
<tr><td>2024<td>江西<td>物理类<td>宣城校区<td>普通批<td>过程装备与控制工程<td>599<td>600.62<td>603<td>520
<tr><td>2024<td>江西<td>物理类<td>宣城校区<td>普通批<td>新能源材料与器件<td>601<td>603.8<td>606<td>520
<tr><td>2024<td>江西<td>物理类<td>宣城校区<td>普通批<td>机械工程<td>601<td>602.13<td>605<td>520
<tr><td>2024<td>江西<td>物理类<td>宣城校区<td>普通批<td>智能科学与技术<td>603<td>604.75<td>607<td>520
</tbody>
</table>
</body>
</html>
```

FILE: styles.css
```css
html, body {
  margin: 0;
  padding: 0;
  background: #ffffff;
}

body {
  width: 500px;
}

.sheet {
  border-collapse: collapse;
  table-layout: fixed;
  width: 494px;
  margin: 0 0 0 3px;
  font-family: "Liberation Serif", "Noto Sans CJK SC", serif;
  font-size: 8.7px;
  color: #222222;
}

.c-year { width: 30.7px; }
.c-prov { width: 30px; }
.c-kind { width: 44.3px; }
.c-camp { width: 61.7px; }
.c-type { width: 40px; }
.c-major { width: 162.7px; }
.c-min { width: 30px; }
.c-avg { width: 33.3px; }
.c-max { width: 30.7px; }
.c-line { width: 30.6px; }

.sheet tr {
  height: 11.07px;
}

.sheet tr.head {
  height: 14.5px;
}

.sheet th,
.sheet td {
  border: 1px solid #6a6a6a;
  padding: 0;
  line-height: 9px;
  text-align: center;
  vertical-align: middle;
  white-space: nowrap;
  overflow: hidden;
  font-weight: normal;
}

.sheet th {
  border-top-color: #ffffff;
  font-size: 9.2px;
}
```
